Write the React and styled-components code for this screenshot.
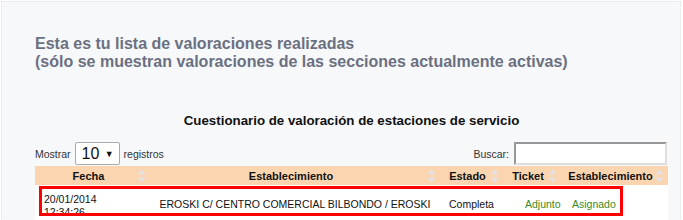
import React from "react";
import styled, { createGlobalStyle } from "styled-components";

const GlobalStyle = createGlobalStyle`
  html, body {
    margin: 0;
    padding: 0;
    background: #ffffff;
  }
  body {
    font-family: "Liberation Sans", Arial, sans-serif;
    color: #222;
  }
`;

const columns = [
  { title: "Fecha", width: 115 },
  { title: "Establecimiento", width: 290 },
  { title: "Estado", width: 63 },
  { title: "Ticket", width: 58 },
  { title: "Establecimiento", width: 107 },
];

const gridTemplate = columns.map((c) => `${c.width}px`).join(" ");

const App = () => {
  return (
    <>
      <GlobalStyle />
      <Page>
        <Heading>
          Esta es tu lista de valoraciones realizadas
          <br />
          (sólo se muestran valoraciones de las secciones actualmente activas)
        </Heading>
        <TableWrap>
          <Caption>Cuestionario de valoración de estaciones de servicio</Caption>
          <Controls>
            <Length>
              Mostrar
              <SelectBox>
                <span>10</span>
                <Caret>▼</Caret>
              </SelectBox>
              registros
            </Length>
            <Search>
              Buscar:
              <SearchInput type="text" />
            </Search>
          </Controls>
          <HeadRow>
            {columns.map((c, i) => (
              <HeadCell key={i}>
                {c.title}
                <SortIcon />
              </HeadCell>
            ))}
          </HeadRow>
          <BodyRow>
            <Cell $pad="9px" $top="8px">
              20/01/2014
              <br />
              12:34:26
            </Cell>
            <Cell $center>EROSKI C/ CENTRO COMERCIAL BILBONDO / EROSKI</Cell>
            <Cell $center>Completa</Cell>
            <Cell $pad="22px" $green>
              Adjunto
            </Cell>
            <Cell $pad="11px" $green>
              Asignado
            </Cell>
            <Highlight />
          </BodyRow>
        </TableWrap>
      </Page>
    </>
  );
};

const SortIcon = () => (
  <SortSvg width="9" height="16" viewBox="0 0 9 16">
    <path d="M4.5 1 L8.5 6.5 L0.5 6.5 Z" fill="#e6e1de" />
    <path d="M4.5 15 L8.5 9.5 L0.5 9.5 Z" fill="#e6e1de" />
  </SortSvg>
);

export default App;

const Page = styled.div`
  height: 220px;
  box-sizing: border-box;
  margin: 1px 2px 0 1px;
  border-top: 1px dotted #dce3ea;
  border-left: 1px dotted #dce3ea;
  border-right: 1px dotted #dce3ea;
  background: #f7f8fa;
  padding: 33px 0 0 33px;
  overflow: hidden;
`;

const Heading = styled.h2`
  margin: 0;
  font-size: 16px;
  line-height: 18px;
  font-weight: bold;
  color: #6b7081;
`;

const TableWrap = styled.div`
  width: 633px;
  margin-top: 42px;
`;

const Caption = styled.div`
  text-align: center;
  font-size: 13.3px;
  font-weight: bold;
  color: #111;
  line-height: 16px;
`;

const Controls = styled.div`
  display: flex;
  justify-content: space-between;
  align-items: center;
  margin-top: 13px;
  height: 23px;
  font-size: 10.5px;
  color: #333;
`;

const Length = styled.div`
  display: flex;
  align-items: center;
  gap: 4px;
`;

const SelectBox = styled.div`
  display: flex;
  align-items: center;
  justify-content: space-between;
  box-sizing: border-box;
  width: 45px;
  height: 23px;
  padding: 0 5px 0 6px;
  background: #fff;
  border: 1px solid #a9a9a9;
  border-radius: 2px;
  font-size: 16px;
  color: #111;
`;

const Caret = styled.span`
  font-size: 9px;
`;

const Search = styled.div`
  display: flex;
  align-items: center;
  gap: 5px;
  margin-right: 1px;
`;

const SearchInput = styled.input`
  box-sizing: border-box;
  width: 153px;
  height: 23px;
  border: 2px solid #999;
  border-right-color: #ddd;
  border-bottom-color: #ddd;
  background: #fff;
`;

const HeadRow = styled.div`
  display: grid;
  grid-template-columns: ${gridTemplate};
  height: 19px;
  margin-top: 1px;
  background: #fad5b0;
`;

const HeadCell = styled.div`
  position: relative;
  display: flex;
  align-items: center;
  justify-content: center;
  padding: 0 18px 0 10px;
  font-size: 11px;
  font-weight: bold;
  color: #111;
`;

const SortSvg = styled.svg`
  position: absolute;
  right: 4px;
  top: 2px;
`;

const BodyRow = styled.div`
  position: relative;
  display: grid;
  grid-template-columns: ${gridTemplate};
  height: 40px;
  background: #fff;
  align-items: start;
`;

const Cell = styled.div`
  padding: ${(p) => p.$top || "13px"} 0 0 ${(p) => p.$pad || "0"};
  text-align: ${(p) => (p.$center ? "center" : "left")};
  font-size: 10.5px;
  line-height: 13px;
  color: ${(p) => (p.$green ? "#3a8a1e" : "#111")};
`;

const Highlight = styled.div`
  position: absolute;
  left: 4px;
  top: 1px;
  width: 584px;
  height: 30px;
  box-sizing: border-box;
  border: 3px solid #f00;
  pointer-events: none;
`;
